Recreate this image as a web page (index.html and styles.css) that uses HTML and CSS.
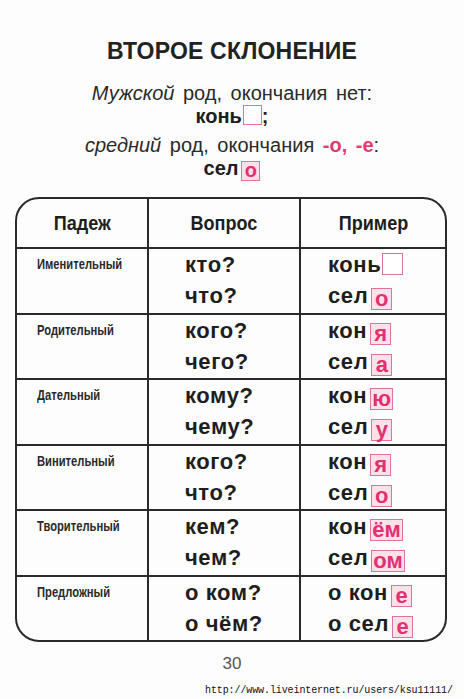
FILE: index.html
```html
<!DOCTYPE html>
<html>
<head>
    <title>Второе склонение</title>
    <link rel="stylesheet" href="styles.css">
</head>
<body>
    <div class="page">
        <h1 class="title">ВТОРОЕ СКЛОНЕНИЕ</h1>
        <div class="rule">
            <p><i>Мужской</i> род, окончания нет:</p>
            <p class="word">конь<span class="end empty"></span>;</p>
        </div>
        <div class="rule">
            <p><i>средний</i> род, окончания <b class="pink">-о, -е</b>:</p>
            <p class="word">сел<span class="end">о</span></p>
        </div>

        <div class="table">
            <div class="row head">
                <div class="cell"><span>Падеж</span></div>
                <div class="cell"><span>Вопрос</span></div>
                <div class="cell"><span>Пример</span></div>
            </div>
            <div class="row">
                <div class="cell case"><span>Именительный</span></div>
                <div class="cell q"><span>кто?</span><span>что?</span></div>
                <div class="cell ex"><span>конь<b class="end empty tight"></b></span><span>сел<b class="end">о</b></span></div>
            </div>
            <div class="row">
                <div class="cell case"><span>Родительный</span></div>
                <div class="cell q"><span>кого?</span><span>чего?</span></div>
                <div class="cell ex"><span>кон<b class="end">я</b></span><span>сел<b class="end">а</b></span></div>
            </div>
            <div class="row">
                <div class="cell case"><span>Дательный</span></div>
                <div class="cell q"><span>кому?</span><span>чему?</span></div>
                <div class="cell ex"><span>кон<b class="end">ю</b></span><span>сел<b class="end">у</b></span></div>
            </div>
            <div class="row">
                <div class="cell case"><span>Винительный</span></div>
                <div class="cell q"><span>кого?</span><span>что?</span></div>
                <div class="cell ex"><span>кон<b class="end">я</b></span><span>сел<b class="end">о</b></span></div>
            </div>
            <div class="row">
                <div class="cell case"><span>Творительный</span></div>
                <div class="cell q"><span>кем?</span><span>чем?</span></div>
                <div class="cell ex"><span>кон<b class="end">ём</b></span><span>сел<b class="end">ом</b></span></div>
            </div>
            <div class="row">
                <div class="cell case"><span>Предложный</span></div>
                <div class="cell q"><span>о ком?</span><span>о чём?</span></div>
                <div class="cell ex"><span>о кон<b class="end">е</b></span><span>о сел<b class="end">е</b></span></div>
            </div>
        </div>

        <div class="pagenum">30</div>
        <div class="url">http://www.liveinternet.ru/users/ksu11111/</div>
    </div>
</body>
</html>
```

FILE: styles.css
```css
body {
    margin: 0;
    background-color: #fdfdfd;
    color: #1e1e1e;
    font-family: "Liberation Sans", Arial, sans-serif;
}
.page {
    width: 464px;
    padding-top: 38px;
}
.title {
    margin: 0;
    font-size: 23px;
    line-height: 26px;
    text-align: center;
    color: #222;
    letter-spacing: 0.2px;
}
.rule {
    text-align: center;
    margin-top: 6px;
}
.rule:first-of-type {
    margin-top: 18px;
}
.rule p {
    margin: 0;
    font-size: 20px;
    line-height: 23px;
    color: #2a2a2a;
    word-spacing: 3px;
}
.rule i {
    font-style: italic;
}
.rule .word {
    font-weight: bold;
    font-size: 20px;
    color: #1e1e1e;
    word-spacing: 0;
}
.pink {
    color: #e23a74;
}
.end {
    display: inline-block;
    min-width: 15px;
    height: 18px;
    padding: 0 1px;
    margin-left: 3px;
    border: 1.5px solid #e5709a;
    background-color: #fbe2ea;
    color: #e2316f;
    font-weight: bold;
    font-size: 20px;
    line-height: 17px;
    text-align: center;
    vertical-align: -2px;
}
.end.empty {
    background-color: #fff;
    margin-left: 1px;
}
.end.tight {
    margin-left: 1px;
}
.table {
    margin: 16px 17px 0 15px;
    border: 2px solid #2a2a2a;
    border-radius: 24px;
    overflow: hidden;
}
.row {
    display: grid;
    grid-template-columns: 130px 152px 1fr;
    height: 65.5px;
    border-top: 2px solid #2a2a2a;
    box-sizing: border-box;
}
.row.head {
    height: 48px;
    border-top: none;
}
.cell + .cell {
    border-left: 2px solid #2a2a2a;
}
.head .cell {
    display: flex;
    align-items: center;
    justify-content: center;
    font-weight: bold;
    font-size: 21px;
    color: #1e1e1e;
}
.head .cell span {
    display: inline-block;
    transform: scaleX(0.86);
}
.case {
    padding-left: 20px;
    font-weight: bold;
    font-size: 14px;
    line-height: 31px;
    color: #2a2a2a;
    white-space: nowrap;
}
.case span {
    display: inline-block;
    transform: scaleX(0.8);
    transform-origin: left center;
}
.q, .ex {
    display: flex;
    flex-direction: column;
    font-weight: bold;
    font-size: 22px;
    line-height: 31px;
    letter-spacing: 0.6px;
}
.q {
    padding-left: 36px;
}
.ex {
    padding-left: 27px;
}
.ex .end {
    min-width: 17px;
    height: 20px;
    font-size: 22px;
    line-height: 19px;
    letter-spacing: 0;
    vertical-align: -3px;
}
.pagenum {
    margin-top: 12px;
    text-align: center;
    font-size: 17px;
    color: #555;
}
.url {
    margin-top: 11px;
    padding-left: 205px;
    font-family: "Liberation Mono", monospace;
    font-size: 10px;
    letter-spacing: -0.1px;
    color: #111;
}
```
